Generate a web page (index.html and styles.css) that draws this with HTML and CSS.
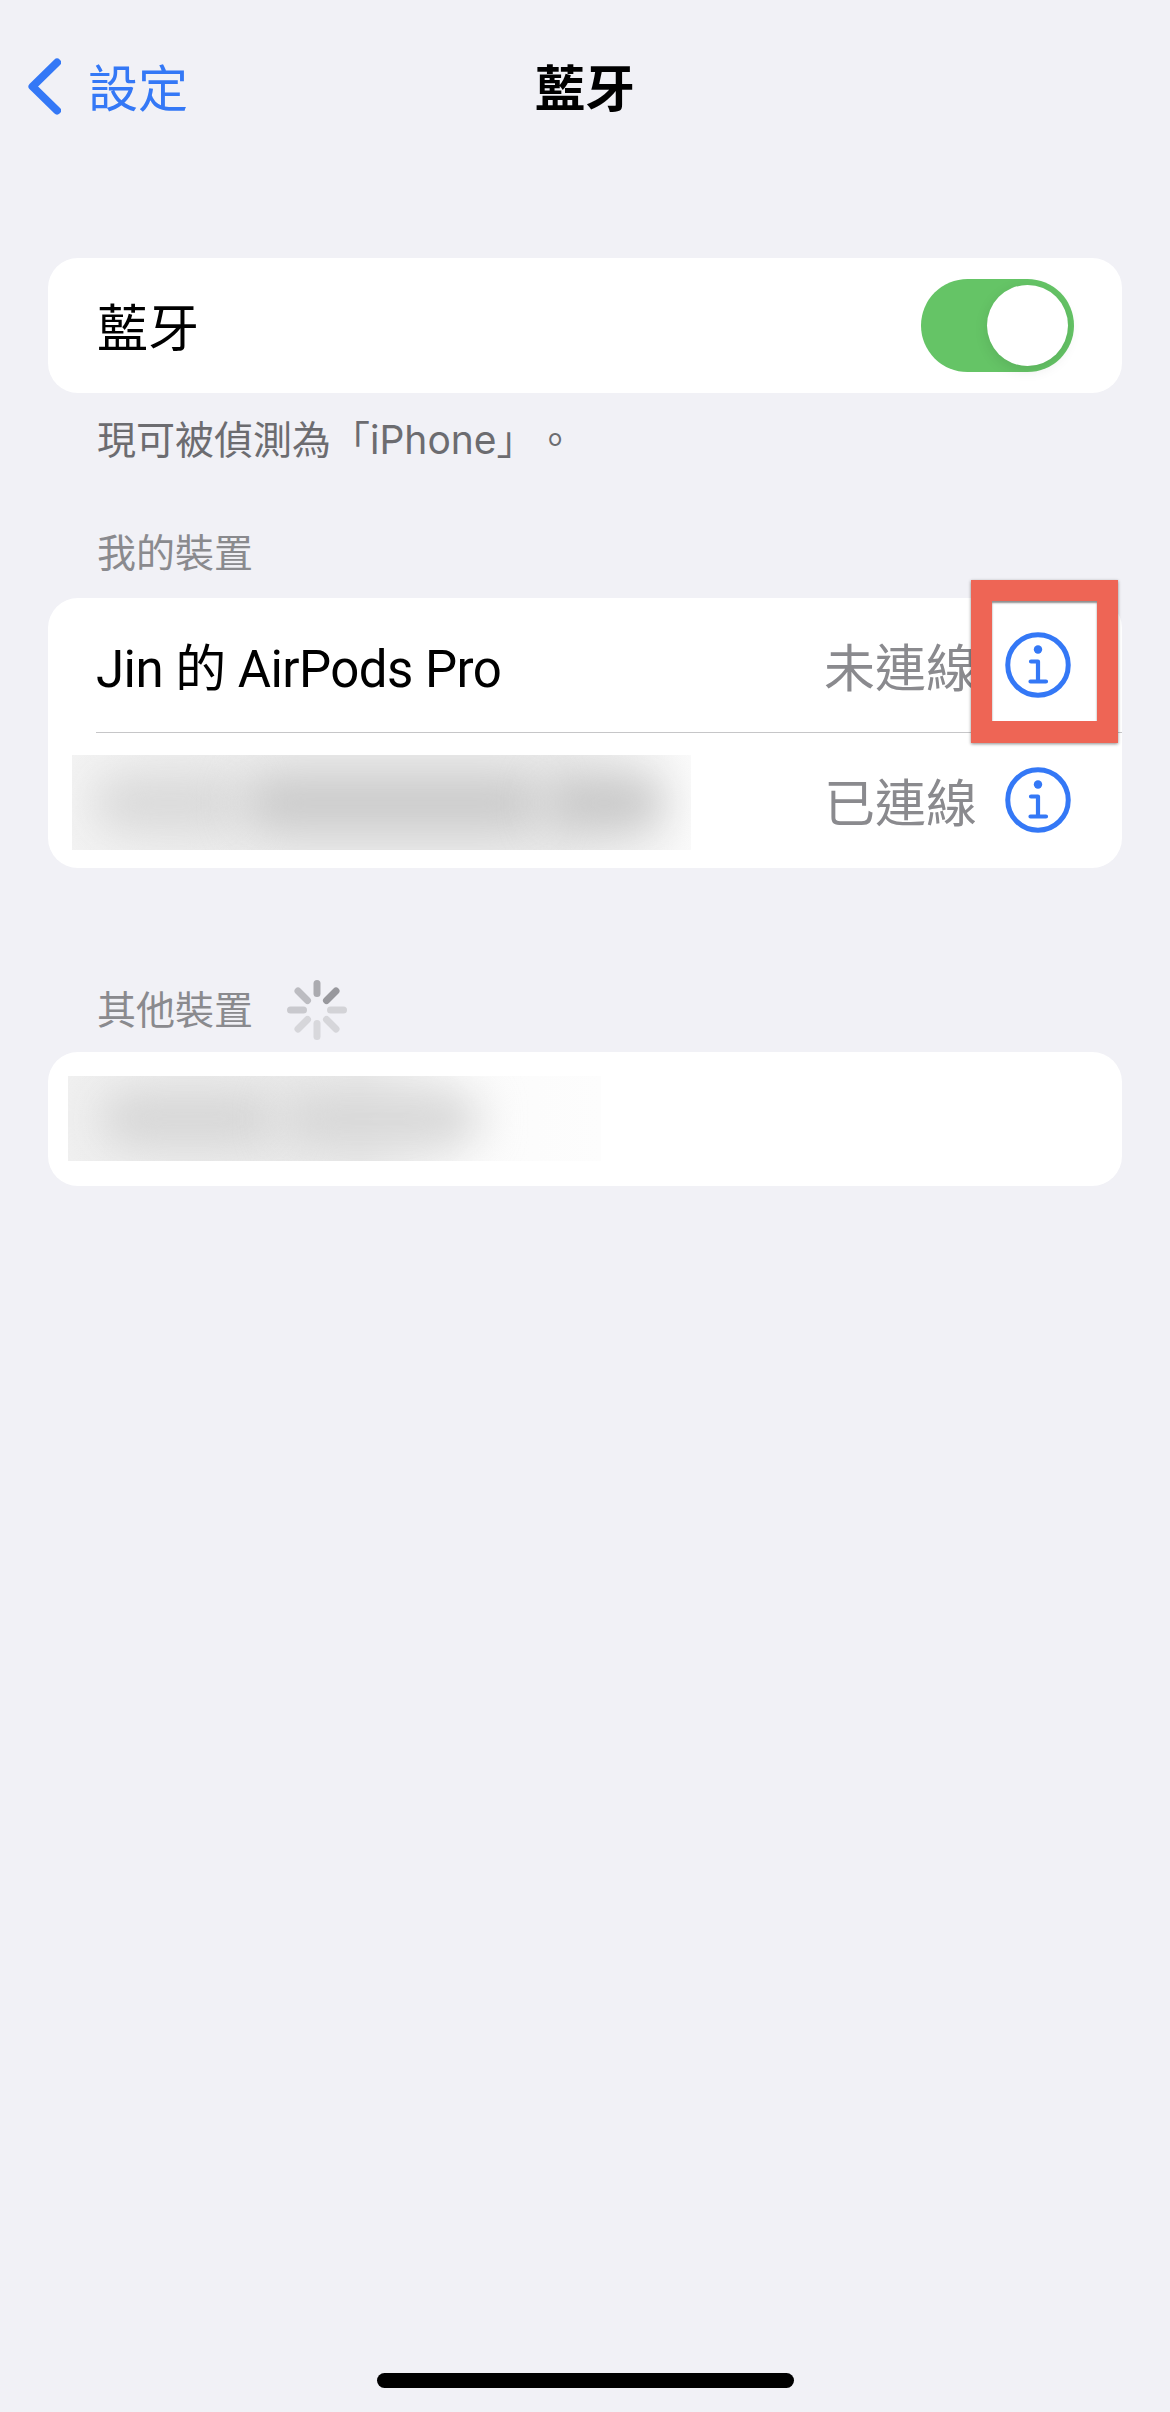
FILE: index.html
```html
<!DOCTYPE html>
<html lang="zh-Hant">
<head>
    <meta charset="UTF-8">
    <meta name="viewport" content="width=device-width, initial-scale=1.0">
    <title>藍牙</title>
    <link rel="stylesheet" href="styles.css">
</head>
<body>
    <div class="page">

        <!-- Barra superior -->
        <header class="nav-bar">
            <a class="nav-back" href="#">
                <svg class="nav-chevron" viewBox="0 0 33 57" width="33" height="57">
                    <polyline points="29,4.5 4.5,28.5 29,52.5" fill="none" stroke="#3478f6" stroke-width="8" stroke-linecap="round" stroke-linejoin="round"/>
                </svg>
                <span>設定</span>
            </a>
            <h1 class="nav-title">藍牙</h1>
            <div></div>
        </header>

        <main class="content">
            <section class="card">
                <div class="row row-toggle">
                    <span class="row-label">藍牙</span>
                    <div class="toggle"><div class="toggle-knob"></div></div>
                </div>
            </section>
            <p class="card-note">現可被偵測為「iPhone」。</p>

            <h2 class="section-title section-mine">我的裝置</h2>
            <section class="card">
                <div class="row">
                    <span class="row-label row-device">Jin 的 AirPods Pro</span>
                    <span class="row-status">未連線</span>
                    <svg class="info-icon" viewBox="0 0 66 66" width="66" height="66">
                        <circle cx="33" cy="33" r="30.25" fill="none" stroke="#3478f6" stroke-width="5"/>
                        <circle cx="33" cy="17.5" r="4.2" fill="#3478f6"/>
                        <path d="M26 29.5H33V49.5M25.5 49.5H41" fill="none" stroke="#3478f6" stroke-width="4.2" stroke-linecap="round" stroke-linejoin="round"/>
                    </svg>
                </div>
                <div class="row-divider"></div>
                <div class="row row-hidden">
                    <div class="blur-box blur-mine">
                        <span class="blob blob-a"></span>
                        <span class="blob blob-b"></span>
                        <span class="blob blob-c"></span>
                    </div>
                    <span class="row-status">已連線</span>
                    <svg class="info-icon" viewBox="0 0 66 66" width="66" height="66">
                        <circle cx="33" cy="33" r="30.25" fill="none" stroke="#3478f6" stroke-width="5"/>
                        <circle cx="33" cy="17.5" r="4.2" fill="#3478f6"/>
                        <path d="M26 29.5H33V49.5M25.5 49.5H41" fill="none" stroke="#3478f6" stroke-width="4.2" stroke-linecap="round" stroke-linejoin="round"/>
                    </svg>
                </div>
                <!-- Moldura vermelha da anotação -->
                <div class="mark-frame"></div>
            </section>

            <div class="section-title section-other">
                <h2 class="section-text">其他裝置</h2>
                <svg class="spinner" viewBox="0 0 60 60" width="60" height="60" fill="none" stroke-width="7" stroke-linecap="round">
                    <line x1="30" y1="13.5" x2="30" y2="3.5" stroke="#ababb0"/>
                    <line x1="39.5" y1="20.5" x2="49" y2="11" stroke="#98989d"/>
                    <line x1="43.5" y1="30" x2="56.5" y2="30" stroke="#d3d3d7"/>
                    <line x1="39.5" y1="39.5" x2="49" y2="49" stroke="#d6d6da"/>
                    <line x1="30" y1="43.5" x2="30" y2="56.5" stroke="#d8d8dc"/>
                    <line x1="20.5" y1="39.5" x2="11" y2="49" stroke="#d6d6da"/>
                    <line x1="16.5" y1="30" x2="3.5" y2="30" stroke="#c9c9ce"/>
                    <line x1="20.5" y1="20.5" x2="11" y2="11" stroke="#bcbcc1"/>
                </svg>
            </div>
            <section class="card">
                <div class="row row-other">
                    <div class="blur-box blur-other">
                        <span class="blob blob-d"></span>
                        <span class="blob blob-e"></span>
                    </div>
                </div>
            </section>
        </main>

        <div class="home-bar"></div>
    </div>
</body>
</html>
```

FILE: styles.css
```css
/* Ajustes - Bluetooth */
body {
    margin: 0;
    background-color: #f1f1f6;
    font-family: Roboto, "Noto Sans CJK TC", sans-serif;
    color: #000;
    text-spacing-trim: space-all;
}

.page {
    width: 1170px;
    height: 2412px;
    display: flex;
    flex-direction: column;
    overflow: hidden;
}

/* Barra superior */
.nav-bar {
    height: 170px;
    display: grid;
    grid-template-columns: 1fr auto 1fr;
    align-items: center;
    padding-left: 28px;
    padding-right: 28px;
    box-sizing: border-box;
}

.nav-back {
    display: flex;
    align-items: center;
    gap: 27px;
    color: #3478f6;
    font-size: 50px;
    text-decoration: none;
}

.nav-chevron {
    margin-top: 3px;
}

.nav-title {
    margin: 0;
    font-size: 50px;
    font-weight: 700;
}

/* Cartões */
.content {
    padding: 88px 48px 0;
}

.card {
    position: relative;
    background-color: #fff;
    border-radius: 30px;
}

.row {
    height: 134.5px;
    display: flex;
    align-items: center;
    padding: 0 51px 0 48px;
    font-size: 51px;
}

.row-label {
    flex: 1;
}

.row-device {
    letter-spacing: -0.55px;
}

.row-toggle {
    padding-right: 48px;
    padding-left: 49px;
}

.row-status {
    color: #8a8a8e;
    margin-right: 28px;
}

.row-divider {
    height: 1px;
    margin-left: 48px;
    background-color: #c6c6c8;
}

.row-hidden {
    padding-left: 24px;
}

.row-hidden .blur-box {
    margin-right: auto;
    margin-top: 5px;
}

.row-other {
    padding-left: 20px;
}

/* Interruptor */
.toggle {
    width: 153px;
    height: 93px;
    padding: 6px;
    box-sizing: border-box;
    display: flex;
    justify-content: flex-end;
    background-color: #65c466;
    border-radius: 47px;
}

.toggle-knob {
    width: 81px;
    height: 81px;
    background-color: #fff;
    border-radius: 50%;
    box-shadow: 0 4px 14px rgba(0, 0, 0, 0.1);
}

/* Textos de seção */
.card-note {
    margin: 23px 0 0 49px;
    font-family: Inter, "Noto Sans CJK TC", sans-serif;
    font-size: 39px;
    line-height: 48px;
    color: #6c6c70;
}

.section-title {
    margin: 0 0 0 49px;
    font-size: 39px;
    font-weight: 400;
    color: #8a8a8e;
}

.section-mine {
    line-height: 48px;
    margin-top: 66px;
    margin-bottom: 20px;
}

.section-other {
    display: flex;
    align-items: center;
    gap: 34px;
    height: 60px;
    margin-top: 112px;
    margin-bottom: 12px;
}

.section-text {
    margin: 0 0 5px;
    font-size: 39px;
    font-weight: 400;
}

/* Áreas borradas */
.blur-box {
    display: flex;
    align-items: center;
    overflow: hidden;
}

.blur-mine {
    width: 619px;
    height: 95px;
    background: linear-gradient(to right, #f3f3f3, #ebebeb 35%, #ebebeb 80%, #fafafa);
}

.blur-other {
    width: 533px;
    height: 85px;
    background: linear-gradient(to right, #f0f0f0, #ebebeb 55%, #fbfbfb 75%, #fdfdfd);
}

.blob {
    display: block;
    height: 54px;
    filter: blur(22px);
    border-radius: 27px;
}

.blob-a {
    width: 150px;
    margin-left: 22px;
    background-color: #d8d8d8;
}

.blob-b {
    width: 300px;
    background-color: #c9c9c9;
}

.blob-c {
    width: 120px;
    background-color: #c6c6c6;
}

.blob-d {
    width: 180px;
    margin-left: 32px;
    background-color: #d5d5d5;
}

.blob-e {
    width: 200px;
    background-color: #d6d6d6;
}

/* Moldura vermelha */
.mark-frame {
    position: absolute;
    top: -18px;
    left: 923px;
    width: 147px;
    height: 163px;
    box-sizing: border-box;
    border-style: solid;
    border-color: #ee6555;
    border-width: 21px 21px 22px 21px;
    box-shadow: 0 1px 3px rgba(0, 0, 0, 0.45), inset 0 2px 2px rgba(0, 0, 0, 0.45);
}

/* Barra inferior */
.home-bar {
    width: 417px;
    height: 15px;
    margin: auto auto 24px;
    background-color: #000;
    border-radius: 8px;
}
```
